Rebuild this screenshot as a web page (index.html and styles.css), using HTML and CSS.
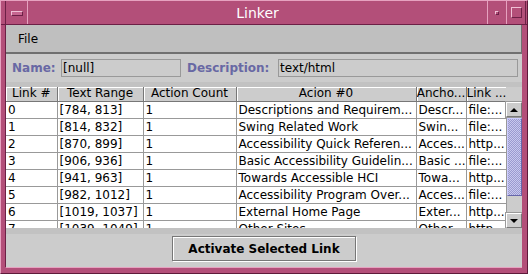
FILE: index.html
```html
<!DOCTYPE html>
<html lang="en">
<head>
    <meta charset="UTF-8">
    <title>Linker</title>
    <link rel="stylesheet" href="styles.css">
</head>
<body>
  <div class="window">
    <div class="titlebar">
      <div class="tbtn tbtn-menu"><span class="bar"></span></div>
      <div class="title">Linker</div>
      <div class="tbtn tbtn-min"><span class="dot"></span></div>
      <div class="tbtn tbtn-max"><span class="box"></span></div>
    </div>
    <div class="content">
      <div class="menubar"><span class="menu">File</span></div>

      <div class="fields">
        <span class="label">Name:</span>
        <div class="field field-name">[null]</div>
        <span class="label label-desc">Description:</span>
        <div class="field field-desc">text/html</div>
      </div>

      <div class="strip"></div>

      <div class="scrollpane">
        <div class="tablewrap">
          <table class="links">
            <colgroup>
              <col style="width:51px"><col style="width:86px"><col style="width:93px">
              <col style="width:180px"><col style="width:50px"><col style="width:40px">
            </colgroup>
            <thead>
              <tr>
                <th>Link #</th><th>Text Range</th><th>Action Count</th>
                <th>Acion #0</th><th>Ancho...</th><th>Link ...</th>
              </tr>
            </thead>
            <tbody>
              <tr><td>0</td><td>[784, 813]</td><td>1</td><td>Descriptions and Requirem...</td><td>Descr...</td><td>file:...</td></tr>
              <tr><td>1</td><td>[814, 832]</td><td>1</td><td>Swing Related Work</td><td>Swin...</td><td>file:...</td></tr>
              <tr><td>2</td><td>[870, 899]</td><td>1</td><td>Accessibility Quick Referen...</td><td>Acces...</td><td>http...</td></tr>
              <tr><td>3</td><td>[906, 936]</td><td>1</td><td>Basic Accessibility Guidelin...</td><td>Basic ...</td><td>file:...</td></tr>
              <tr><td>4</td><td>[941, 963]</td><td>1</td><td>Towards Accessible HCI</td><td>Towa...</td><td>http...</td></tr>
              <tr><td>5</td><td>[982, 1012]</td><td>1</td><td>Accessibility Program Over...</td><td>Acces...</td><td>file:...</td></tr>
              <tr><td>6</td><td>[1019, 1037]</td><td>1</td><td>External Home Page</td><td>Exter...</td><td>http...</td></tr>
              <tr><td>7</td><td>[1039, 1049]</td><td>1</td><td>Other Sites</td><td>Other...</td><td>http...</td></tr>
            </tbody>
          </table>
        </div>
        <div class="scrollbar">
          <div class="corner"></div>
          <div class="arrow arrow-up"><span></span></div>
          <div class="track">
            <div class="thumb"></div>
          </div>
          <div class="arrow arrow-down"><span></span></div>
        </div>
      </div>

      <div class="strip strip-bottom"></div>

      <div class="buttons">
        <button class="activate">Activate Selected Link</button>
      </div>
    </div>
  </div>
</body>
</html>
```

FILE: styles.css
```css
body {
  margin: 0;
  padding: 0;
  font-family: "DejaVu Sans", Verdana, sans-serif;
  font-size: 12px;
  background: #cccccc;
}

.window {
  width: 528px;
  height: 274px;
  box-sizing: border-box;
  background: #b34f79;
  border-top: 1px solid #e6a2c0;
  border-left: 1px solid #e6a2c0;
  border-right: 1px solid #5e1a3a;
  border-bottom: 1px solid #5e1a3a;
  display: flex;
  flex-direction: column;
}

/* barre de titre */
.titlebar {
  height: 23px;
  display: flex;
  align-items: stretch;
  border-bottom: 1px solid #6c2046;
}
.tbtn {
  display: flex;
  align-items: center;
  justify-content: center;
  box-sizing: border-box;
}
.tbtn-menu {
  width: 23px;
  margin-left: 4px;
  border-left: 1px solid #6c2046;
  border-right: 1px solid #e6a2c0;
}
.tbtn-menu .bar {
  width: 10px;
  height: 3px;
  border: 1px solid #6c2046;
  border-top-color: #f0c0d6;
  border-left-color: #f0c0d6;
  background: #c66690;
  margin-top: 2px;
}
.title {
  flex: 1;
  text-align: center;
  color: #ffffff;
  font-size: 14px;
  line-height: 24px;
}
.tbtn-min {
  width: 19px;
  border-left: 1px solid #e6a2c0;
}
.tbtn-min .dot {
  width: 2px;
  height: 2px;
  border: 1px solid #6c2046;
  border-top-color: #f0c0d6;
  border-left-color: #f0c0d6;
}
.tbtn-max {
  width: 20px;
  margin-right: 1px;
  border-left: 1px solid #e6a2c0;
  border-right: 1px solid #6c2046;
}
.tbtn-max .box {
  width: 9px;
  height: 9px;
  border: 1px solid #6c2046;
  border-top-color: #f0c0d6;
  border-left-color: #f0c0d6;
}

/* contenu */
.content {
  flex: 1;
  margin: 0 5px 5px 4px;
  background: #cccccc;
  display: flex;
  flex-direction: column;
  border-left: 1px solid #6c2046;
  border-bottom: 1px solid #e6a2c0;
}

.menubar {
  height: 27px;
  background: #bfbfbf;
  border-bottom: 2px solid #707070;
  border-right: 1px solid #707070;
  display: flex;
  align-items: center;
}
.menu {
  padding-left: 12px;
  color: #000;
}

.fields {
  height: 28px;
  display: flex;
  align-items: center;
  gap: 0;
  padding-left: 6px;
}
.label {
  font-weight: bold;
  color: #6868a4;
  width: 49px;
}
.label-desc {
  width: 91px;
  margin-left: 6px;
}
.field {
  height: 16px;
  line-height: 16px;
  border: 1px solid #999999;
  background: #cccccc;
  padding-left: 1px;
  box-sizing: content-box;
}
.field-name {
  width: 117px;
}
.field-desc {
  width: 237px;
}

.strip {
  height: 5px;
  background: #c2c2c2;
}
.strip-bottom {
  height: 6px;
}

/* table */
.scrollpane {
  height: 141px;
  display: flex;
  overflow: hidden;
}
.tablewrap {
  width: 500px;
  overflow: hidden;
}
.links {
  table-layout: fixed;
  border-collapse: collapse;
  width: 500px;
  background: #ffffff;
}
.links th {
  height: 14px;
  padding: 0;
  font-weight: normal;
  text-align: center;
  background: #cccccc;
  line-height: 13px;
  box-sizing: border-box;
  border-right: 1px solid #777777;
  border-bottom: 1px solid #777777;
  box-shadow: inset 1px 1px 0 #ffffff;
  white-space: nowrap;
  overflow: hidden;
}
.links td {
  height: 16px;
  padding: 0 0 0 2px;
  line-height: 16px;
  border-right: 1px solid #999999;
  border-bottom: 1px solid #999999;
  white-space: nowrap;
  overflow: hidden;
}

.scrollbar {
  width: 16px;
  display: flex;
  flex-direction: column;
  background: #cccccc;
}
.corner {
  height: 15px;
}
.arrow {
  height: 15px;
  box-sizing: border-box;
  border: 1px solid #777777;
  border-top-color: #ffffff;
  border-left-color: #ffffff;
  display: flex;
  align-items: center;
  justify-content: center;
  background: #cccccc;
  outline: 1px solid #999999;
}
.arrow span {
  width: 0;
  height: 0;
  border-left: 4px solid transparent;
  border-right: 4px solid transparent;
}
.arrow-up span {
  border-bottom: 4px solid #000;
}
.arrow-down span {
  border-top: 4px solid #000;
}
.track {
  flex: 1;
  padding-top: 1px;
  padding-bottom: 17px;
  border-left: 1px solid #999999;
}
.thumb {
  height: 78px;
  box-sizing: border-box;
  border: 1px solid #6666aa;
  border-top-color: #ccccff;
  border-left-color: #ccccff;
  background: repeating-conic-gradient(#c8c8ee 0 25%, #9a9ad0 0 50%) 0 0 / 2px 2px;
}

/* bouton */
.buttons {
  flex: 1;
  display: flex;
  justify-content: center;
  align-items: center;
}
.activate {
  width: 184px;
  height: 25px;
  font-family: "DejaVu Sans", Verdana, sans-serif;
  font-size: 12px;
  font-weight: bold;
  color: #000;
  background: #cccccc;
  border: 1px solid #777777;
  box-shadow: inset 1px 1px 0 #ffffff, 1px 1px 0 #ffffff;
  padding: 0;
  margin-bottom: 4px;
}
```
